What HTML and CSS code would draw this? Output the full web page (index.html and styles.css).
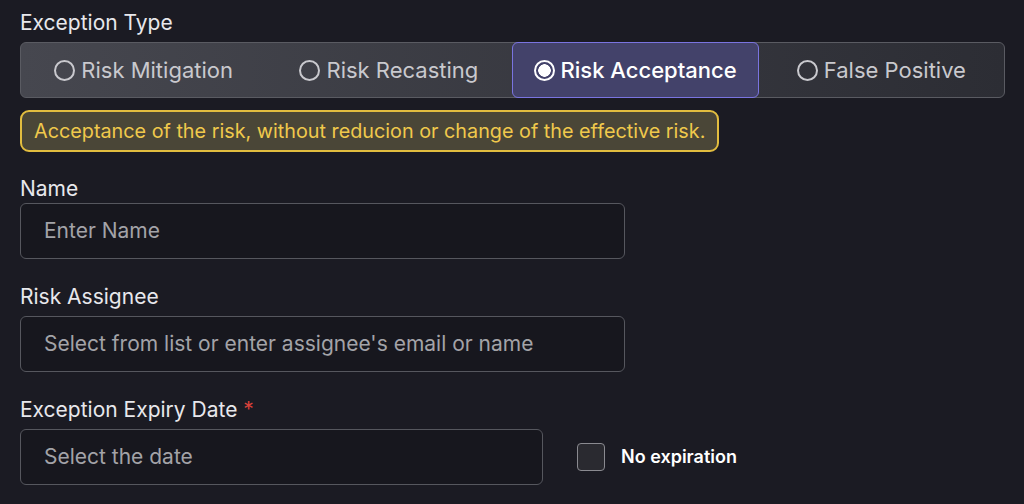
FILE: index.html
```html
<!DOCTYPE html>
<html>
<head>
<meta charset="utf-8">
<link rel="stylesheet" href="styles.css">
</head>
<body>
<div class="form">
  <div class="label first">Exception Type</div>
  <div class="segmented">
    <div class="seg"><span class="radio"></span><span>Risk Mitigation</span></div>
    <div class="seg"><span class="radio"></span><span>Risk Recasting</span></div>
    <div class="seg selected"><span class="radio on"></span><span>Risk Acceptance</span></div>
    <div class="seg"><span class="radio"></span><span>False Positive</span></div>
  </div>
  <div class="note">Acceptance of the risk, without reducion or change of the effective risk.</div>

  <div class="label name-label">Name</div>
  <div class="input wide">Enter Name</div>

  <div class="label">Risk Assignee</div>
  <div class="input wide">Select from list or enter assignee's email or name</div>

  <div class="label">Exception Expiry Date <span class="req">*</span></div>
  <div class="row">
    <div class="input date">Select the date</div>
    <div class="check"><span class="box"></span><span class="check-text">No expiration</span></div>
  </div>
</div>
</body>
</html>
```

FILE: styles.css
```css
html, body {
  margin: 0;
  padding: 0;
  background: #1b1b23;
}
body {
  font-family: Inter, "Noto Sans", sans-serif;
  color: #e6e6ea;
  width: 1024px;
  height: 504px;
  overflow: hidden;
}
.form {
  padding: 11px 0 0 20px;
  display: flex;
  flex-direction: column;
  align-items: flex-start;
}
.label {
  font-size: 21px;
  line-height: 24px;
  color: #e8e8ec;
  margin-top: 26px;
  margin-bottom: 7px;
}
.label.first {
  margin-top: 0;
  margin-bottom: 7px;
}
.label.name-label {
  margin-top: 25px;
  margin-bottom: 2px;
}
.req {
  color: #d9413a;
}
.segmented {
  display: flex;
  width: 985px;
  height: 56px;
  box-sizing: border-box;
  border: 1px solid #5a5b62;
  border-radius: 6px;
  background: linear-gradient(90deg, #46474f 0%, #2c2d34 100%);
}
.seg {
  flex: 1;
  display: flex;
  align-items: center;
  justify-content: center;
  gap: 6px;
  font-size: 22px;
  color: #c9c9ce;
}
.seg.selected {
  margin: -1px 0;
  border: 1px solid #7a74e0;
  border-radius: 6px;
  background: #43426a;
  color: #ffffff;
  font-weight: 500;
}
.radio {
  width: 21px;
  height: 21px;
  border: 2px solid #c9c9ce;
  border-radius: 50%;
  box-sizing: border-box;
  flex: none;
}
.radio.on {
  border: 2px solid #ffffff;
  background: radial-gradient(circle, #ffffff 0 6px, transparent 6.5px);
}
.note {
  margin-top: 12px;
  box-sizing: border-box;
  height: 41.5px;
  padding: 0 12px;
  display: flex;
  align-items: center;
  border: 2px solid #e2bd3f;
  border-radius: 9px;
  background: #4a4637;
  color: #f0c94c;
  font-size: 19.8px;
}
.input {
  box-sizing: border-box;
  height: 56px;
  border: 1px solid #56575e;
  border-radius: 6px;
  background: #17171e;
  display: flex;
  align-items: center;
  padding-left: 23px;
  font-size: 21px;
  color: #a3a3a8;
}
.input.wide {
  width: 605px;
}
.input.date {
  width: 523px;
}
.row {
  display: flex;
  align-items: center;
}
.check {
  display: flex;
  align-items: center;
  margin-left: 34px;
  gap: 16px;
}
.box {
  width: 28px;
  height: 28px;
  box-sizing: border-box;
  border: 1.5px solid #8a8a90;
  border-radius: 4px;
  background: #2a2a30;
}
.check-text {
  font-size: 18px;
  font-weight: 600;
  color: #ffffff;
}
```
